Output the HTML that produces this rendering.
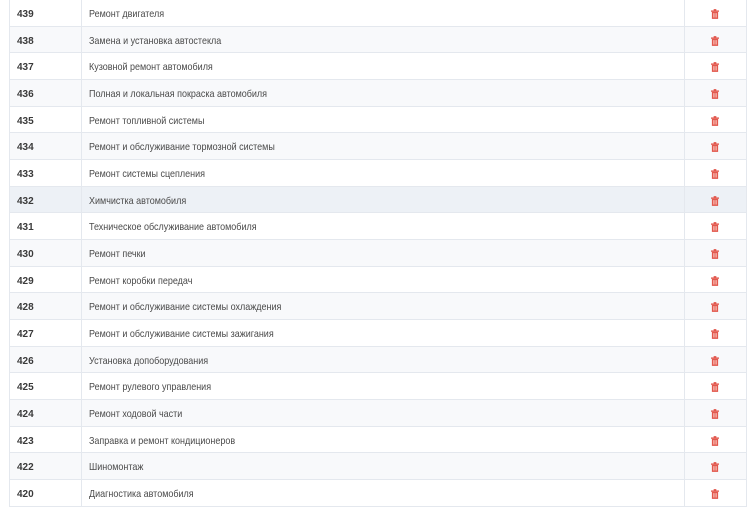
<!DOCTYPE html>
<html><head><meta charset="utf-8"><style>
html,body{margin:0;padding:0;width:756px;height:512px;background:#fff;overflow:hidden;font-family:"Liberation Sans","DejaVu Sans",sans-serif;}
.r{position:absolute;left:9px;width:738px;border-bottom:1px solid #e4e8ee;box-sizing:border-box;font-size:10.5px;color:#4a4a4a;}
.r.s{background:#f8f9fb}
.r.h{background:#edf1f6}
.c{position:absolute;top:1px;line-height:26px;white-space:nowrap}
.id{left:8px;top:2px;font-weight:bold;color:#3a3a3a;font-size:10px}
.nm{left:80px;transform:scaleX(0.856);transform-origin:0 0}
.v1,.v2,.v3,.v4{position:absolute;top:0;width:1px;height:100%;background:#e4e8ee}
.v1{left:0}.v2{left:72px}.v3{left:675px}.v4{right:0}
svg{position:absolute;left:702px;top:9px}
</style></head><body>
<div id="t"></div>
<script>
var d=[["439","Ремонт двигателя"],["438","Замена и установка автостекла"],["437","Кузовной ремонт автомобиля"],["436","Полная и локальная покраска автомобиля"],["435","Ремонт топливной системы"],["434","Ремонт и обслуживание тормозной системы"],["433","Ремонт системы сцепления"],["432","Химчистка автомобиля"],["431","Техническое обслуживание автомобиля"],["430","Ремонт печки"],["429","Ремонт коробки передач"],["428","Ремонт и обслуживание системы охлаждения"],["427","Ремонт и обслуживание системы зажигания"],["426","Установка допоборудования"],["425","Ремонт рулевого управления"],["424","Ремонт ходовой части"],["423","Заправка и ремонт кондиционеров"],["422","Шиномонтаж"],["420","Диагностика автомобиля"]];
var h="";
for(var i=0;i<d.length;i++){
var cls="r"+(i==7?" h":(i%2?" s":""));
var t=Math.round(i*26.67), b=Math.round((i+1)*26.67);
h+='<div class="'+cls+'" style="top:'+t+'px;height:'+(b-t)+'px"><div class="v1"></div><div class="v2"></div><div class="v3"></div><div class="v4"></div><div class="c id">'+d[i][0]+'</div><div class="c nm">'+d[i][1]+'</div><svg width="8" height="10" viewBox="0 0 9 11"><rect x="0" y="1.5" width="9" height="1.5" fill="#e2574c"/><rect x="3" y="0" width="3" height="2" fill="#e2574c"/><rect x="1" y="3" width="7" height="8" fill="#e2574c"/><rect x="2.5" y="4.5" width="1" height="5" fill="#f6b9b1"/><rect x="4" y="4.5" width="1" height="5" fill="#f6b9b1"/><rect x="5.5" y="4.5" width="1" height="5" fill="#f6b9b1"/></svg></div>';
}
document.getElementById("t").innerHTML=h;
</script>
</body></html>
